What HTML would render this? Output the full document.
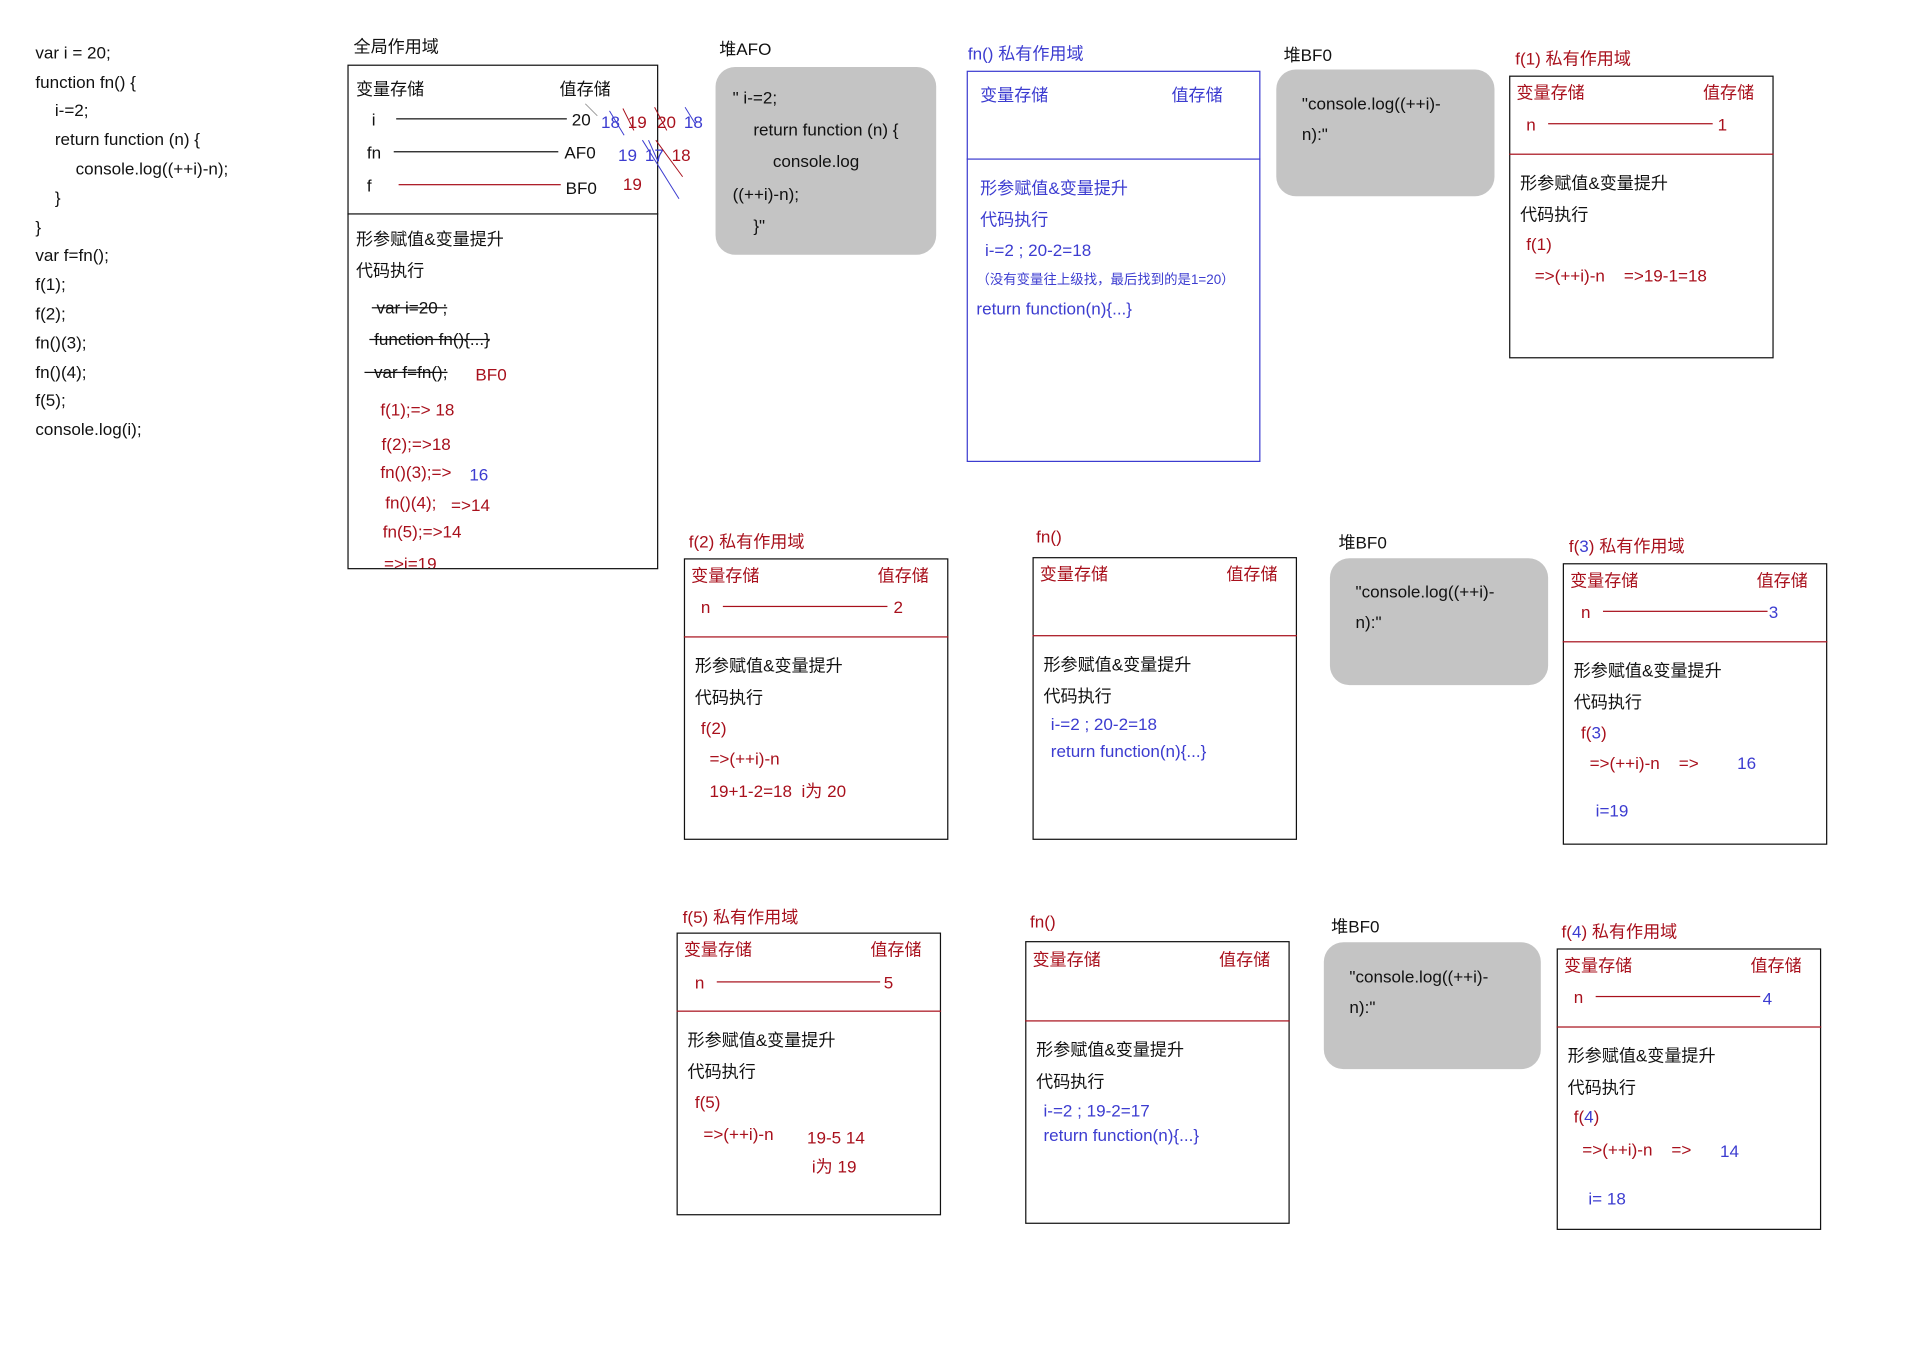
<!DOCTYPE html>
<html><head><meta charset="utf-8">
<style>
html,body{margin:0;padding:0;background:#fff;width:1912px;height:1365px;overflow:hidden}
#w{position:absolute;left:0;top:0;width:1570px;height:1120px;transform:scale(1.219);transform-origin:0 0}
.t{position:absolute;white-space:nowrap;line-height:18px;font-size:14px;font-family:"Liberation Sans Narrow","Liberation Sans","Noto Sans CJK SC",sans-serif;color:#111}
.r{color:#a8101c}.b{color:#3c3cd0}
.s{text-decoration:line-through}
.box{position:absolute;border:1px solid #111;box-sizing:border-box}
.g{position:absolute;background:#c4c4c4;border-radius:16px}
.l{position:absolute;height:1px;background:#111}
.lr{position:absolute;height:1px;background:#a8101c}
.sm{font-size:11px}
</style></head><body><div id="w">
<div class="t" style="left:29px;top:34px">var i = 20;</div>
<div class="t" style="left:29px;top:58px">function fn() {</div>
<div class="t" style="left:45px;top:81px">i-=2;</div>
<div class="t" style="left:45px;top:105px">return function (n) {</div>
<div class="t" style="left:62px;top:129px">console.log((++i)-n);</div>
<div class="t" style="left:45px;top:153px">}</div>
<div class="t" style="left:29px;top:177px">}</div>
<div class="t" style="left:29px;top:200px">var f=fn();</div>
<div class="t" style="left:29px;top:224px">f(1);</div>
<div class="t" style="left:29px;top:248px">f(2);</div>
<div class="t" style="left:29px;top:272px">fn()(3);</div>
<div class="t" style="left:29px;top:296px">fn()(4);</div>
<div class="t" style="left:29px;top:319px">f(5);</div>
<div class="t" style="left:29px;top:343px">console.log(i);</div>

<div class="t" style="left:290px;top:29px">全局作用域</div>
<div class="box" style="left:285px;top:53px;width:255px;height:414px"></div>
<div class="l" style="left:285px;top:175px;width:255px"></div>
<div class="t" style="left:292px;top:64px">变量存储</div>
<div class="t" style="left:459px;top:64px">值存储</div>
<div class="t" style="left:305px;top:89px">i</div><div class="l" style="left:325px;top:97px;width:140px"></div>
<div class="t" style="left:469px;top:89px">20</div>
<div class="t b" style="left:493px;top:91px">18</div><div class="t r" style="left:515px;top:91px">19</div><div class="t r" style="left:539px;top:91px">20</div><div class="t b" style="left:561px;top:91px">18</div>
<div class="t" style="left:301px;top:116px">fn</div><div class="l" style="left:323px;top:124px;width:135px"></div>
<div class="t" style="left:463px;top:116px">AF0</div>
<div class="t b" style="left:507px;top:118px">19</div><div class="t b" style="left:529px;top:118px">17</div><div class="t r" style="left:551px;top:118px">18</div>
<div class="t" style="left:301px;top:143px">f</div><div class="lr" style="left:327px;top:151px;width:133px"></div>
<div class="t" style="left:464px;top:145px">BF0</div><div class="t r" style="left:511px;top:142px">19</div>
<svg style="position:absolute;left:480px;top:85px" width="100" height="80"><g stroke-width="0.8" fill="none"><line x1="20" y1="6" x2="32" y2="26" stroke="#3c3cd0"/><line x1="31" y1="4" x2="40" y2="22" stroke="#a8101c"/><line x1="57" y1="3" x2="67" y2="22" stroke="#a8101c"/><line x1="82" y1="3" x2="90" y2="16" stroke="#3c3cd0"/><line x1="52" y1="30" x2="60" y2="48" stroke="#3c3cd0"/><line x1="47" y1="30" x2="77" y2="78" stroke="#3c3cd0"/><line x1="58" y1="30" x2="80" y2="60" stroke="#a8101c"/><line x1="0" y1="0" x2="10" y2="10" stroke="#999"/></g></svg>
<div class="t" style="left:292px;top:187px">形参赋值&amp;变量提升</div>
<div class="t" style="left:292px;top:213px">代码执行</div>
<div class="t s" style="left:305px;top:243px">&nbsp;var i=20 ;</div>
<div class="t s" style="left:303px;top:269px">&nbsp;function fn(){...}</div>
<div class="t s" style="left:299px;top:296px">&nbsp;&nbsp;var f=fn();</div><div class="t r" style="left:390px;top:298px">BF0</div>
<div class="t r" style="left:312px;top:327px">f(1);=&gt; 18</div>
<div class="t r" style="left:313px;top:355px">f(2);=&gt;18</div>
<div class="t r" style="left:312px;top:378px">fn()(3);=&gt;</div><div class="t b" style="left:385px;top:380px">16</div>
<div class="t r" style="left:316px;top:403px">fn()(4);</div><div class="t r" style="left:370px;top:405px">=&gt;14</div>
<div class="t r" style="left:314px;top:427px">fn(5);=&gt;14</div>
<div style="position:absolute;left:300px;top:450px;width:200px;height:16px;overflow:hidden"><div class="t r" style="left:15px;top:3px">=&gt;i=19</div></div>

<div class="t" style="left:590px;top:31px">堆AFO</div>
<div class="g" style="left:587px;top:55px;width:181px;height:154px"></div>
<div class="t" style="left:601px;top:71px">" i-=2;</div>
<div class="t" style="left:618px;top:97px">return function (n) {</div>
<div class="t" style="left:634px;top:123px">console.log</div>
<div class="t" style="left:601px;top:150px">((++i)-n);</div>
<div class="t" style="left:618px;top:176px">}"</div>

<div class="t b" style="left:794px;top:35px">fn() 私有作用域</div>
<div class="box" style="left:793px;top:58px;width:241px;height:321px;border-color:#3c3cd0"></div>
<div class="l" style="left:793px;top:130px;width:241px;background:#3c3cd0"></div>
<div class="t b" style="left:804px;top:69px">变量存储</div><div class="t b" style="left:961px;top:69px">值存储</div>
<div class="t b" style="left:804px;top:145px">形参赋值&amp;变量提升</div>
<div class="t b" style="left:804px;top:171px">代码执行</div>
<div class="t b" style="left:808px;top:196px">i-=2 ; 20-2=18</div>
<div class="t b sm" style="left:801px;top:221px">（没有变量往上级找，最后找到的是1=20）</div>
<div class="t b" style="left:801px;top:244px">return function(n){...}</div>

<div class="t" style="left:1053px;top:36px">堆BF0</div>
<div class="g" style="left:1047px;top:57px;width:179px;height:104px"></div>
<div class="t" style="left:1068px;top:76px">"console.log((++i)-</div>
<div class="t" style="left:1068px;top:101px">n):"</div>

<div class="t r" style="left:1243px;top:39px">f(1) 私有作用域</div>
<div class="box" style="left:1238px;top:62px;width:217px;height:232px"></div>
<div class="lr" style="left:1238px;top:126px;width:217px"></div>
<div class="t r" style="left:1244px;top:67px">变量存储</div><div class="t r" style="left:1397px;top:67px">值存储</div>
<div class="t r" style="left:1252px;top:93px">n</div><div class="lr" style="left:1270px;top:101px;width:135px"></div><div class="t r" style="left:1409px;top:93px">1</div>
<div class="t" style="left:1247px;top:141px">形参赋值&amp;变量提升</div>
<div class="t" style="left:1247px;top:167px">代码执行</div>
<div class="t r" style="left:1252px;top:191px">f(1)</div>
<div class="t r" style="left:1259px;top:217px">=&gt;(++i)-n &nbsp;&nbsp; =&gt;19-1=18</div>

<div class="t r" style="left:565px;top:435px">f(2) 私有作用域</div>
<div class="box" style="left:561px;top:458px;width:217px;height:231px"></div>
<div class="lr" style="left:561px;top:522px;width:217px"></div>
<div class="t r" style="left:567px;top:463px">变量存储</div><div class="t r" style="left:720px;top:463px">值存储</div>
<div class="t r" style="left:575px;top:489px">n</div><div class="lr" style="left:593px;top:497px;width:135px"></div><div class="t r" style="left:733px;top:489px">2</div>
<div class="t" style="left:570px;top:537px">形参赋值&amp;变量提升</div>
<div class="t" style="left:570px;top:563px">代码执行</div>
<div class="t r" style="left:575px;top:588px">f(2)</div>
<div class="t r" style="left:582px;top:613px">=&gt;(++i)-n</div>
<div class="t r" style="left:582px;top:640px">19+1-2=18 &nbsp;i为 20</div>

<div class="t r" style="left:850px;top:431px">fn()</div>
<div class="box" style="left:847px;top:457px;width:217px;height:232px"></div>
<div class="lr" style="left:847px;top:521px;width:217px"></div>
<div class="t r" style="left:853px;top:462px">变量存储</div><div class="t r" style="left:1006px;top:462px">值存储</div>
<div class="t" style="left:856px;top:536px">形参赋值&amp;变量提升</div>
<div class="t" style="left:856px;top:562px">代码执行</div>
<div class="t b" style="left:862px;top:585px">i-=2 ; 20-2=18</div>
<div class="t b" style="left:862px;top:607px">return function(n){...}</div>

<div class="t" style="left:1098px;top:436px">堆BF0</div>
<div class="g" style="left:1091px;top:458px;width:179px;height:104px"></div>
<div class="t" style="left:1112px;top:476px">"console.log((++i)-</div>
<div class="t" style="left:1112px;top:501px">n):"</div>

<div class="t r" style="left:1287px;top:439px">f(<span class="b">3</span>) 私有作用域</div>
<div class="box" style="left:1282px;top:462px;width:217px;height:231px"></div>
<div class="lr" style="left:1282px;top:526px;width:217px"></div>
<div class="t r" style="left:1288px;top:467px">变量存储</div><div class="t r" style="left:1441px;top:467px">值存储</div>
<div class="t r" style="left:1297px;top:493px">n</div><div class="lr" style="left:1315px;top:501px;width:135px"></div><div class="t b" style="left:1451px;top:493px">3</div>
<div class="t" style="left:1291px;top:541px">形参赋值&amp;变量提升</div>
<div class="t" style="left:1291px;top:567px">代码执行</div>
<div class="t r" style="left:1297px;top:592px">f(<span class="b">3</span>)</div>
<div class="t r" style="left:1304px;top:617px">=&gt;(++i)-n &nbsp;&nbsp; =&gt;</div><div class="t b" style="left:1425px;top:617px">16</div>
<div class="t b" style="left:1309px;top:656px">i=19</div>

<div class="t r" style="left:560px;top:743px">f(5) 私有作用域</div>
<div class="box" style="left:555px;top:765px;width:217px;height:232px"></div>
<div class="lr" style="left:555px;top:829px;width:217px"></div>
<div class="t r" style="left:561px;top:770px">变量存储</div><div class="t r" style="left:714px;top:770px">值存储</div>
<div class="t r" style="left:570px;top:797px">n</div><div class="lr" style="left:588px;top:805px;width:134px"></div><div class="t r" style="left:725px;top:797px">5</div>
<div class="t" style="left:564px;top:844px">形参赋值&amp;变量提升</div>
<div class="t" style="left:564px;top:870px">代码执行</div>
<div class="t r" style="left:570px;top:895px">f(5)</div>
<div class="t r" style="left:577px;top:921px">=&gt;(++i)-n</div><div class="t r" style="left:662px;top:924px">19-5 14</div>
<div class="t r" style="left:666px;top:948px">i为 19</div>

<div class="t r" style="left:845px;top:747px">fn()</div>
<div class="box" style="left:841px;top:772px;width:217px;height:232px"></div>
<div class="lr" style="left:841px;top:837px;width:217px"></div>
<div class="t r" style="left:847px;top:778px">变量存储</div><div class="t r" style="left:1000px;top:778px">值存储</div>
<div class="t" style="left:850px;top:852px">形参赋值&amp;变量提升</div>
<div class="t" style="left:850px;top:878px">代码执行</div>
<div class="t b" style="left:856px;top:902px">i-=2 ; 19-2=17</div>
<div class="t b" style="left:856px;top:922px">return function(n){...}</div>

<div class="t" style="left:1092px;top:751px">堆BF0</div>
<div class="g" style="left:1086px;top:773px;width:178px;height:104px"></div>
<div class="t" style="left:1107px;top:792px">"console.log((++i)-</div>
<div class="t" style="left:1107px;top:817px">n):"</div>

<div class="t r" style="left:1281px;top:755px">f(<span class="b">4</span>) 私有作用域</div>
<div class="box" style="left:1277px;top:778px;width:217px;height:231px"></div>
<div class="lr" style="left:1277px;top:842px;width:217px"></div>
<div class="t r" style="left:1283px;top:783px">变量存储</div><div class="t r" style="left:1436px;top:783px">值存储</div>
<div class="t r" style="left:1291px;top:809px">n</div><div class="lr" style="left:1309px;top:817px;width:135px"></div><div class="t b" style="left:1446px;top:810px">4</div>
<div class="t" style="left:1286px;top:857px">形参赋值&amp;变量提升</div>
<div class="t" style="left:1286px;top:883px">代码执行</div>
<div class="t r" style="left:1291px;top:907px">f(<span class="b">4</span>)</div>
<div class="t r" style="left:1298px;top:934px">=&gt;(++i)-n &nbsp;&nbsp; =&gt;</div><div class="t b" style="left:1411px;top:935px">14</div>
<div class="t b" style="left:1303px;top:974px">i= 18</div>
</div></body></html>
